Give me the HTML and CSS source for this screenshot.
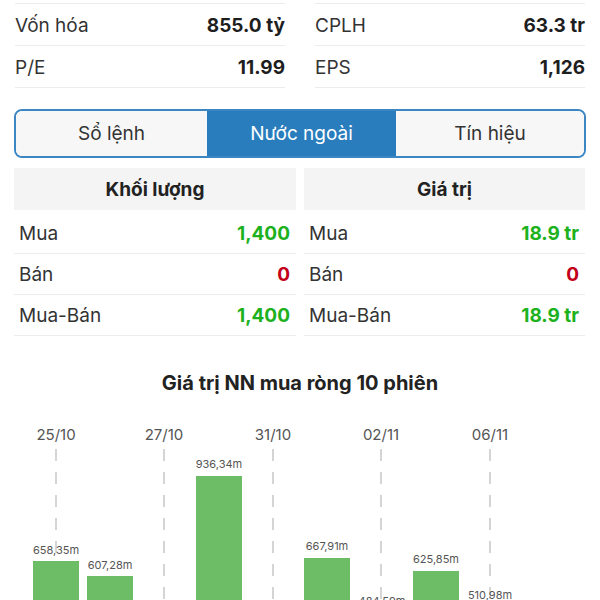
FILE: index.html
```html
<!DOCTYPE html>
<html>
<head>
  <meta charset="UTF-8">
  <title>Nước ngoài</title>
  <link rel="stylesheet" href="styles.css">
</head>
<body>
  <div class="stats">
    <div class="stat-col">
      <div class="stat-row">
        <span class="stat-label">Vốn hóa</span>
        <span class="stat-value">855.0 tỷ</span>
      </div>
      <div class="stat-row">
        <span class="stat-label">P/E</span>
        <span class="stat-value">11.99</span>
      </div>
    </div>
    <div class="stat-col">
      <div class="stat-row">
        <span class="stat-label">CPLH</span>
        <span class="stat-value">63.3 tr</span>
      </div>
      <div class="stat-row">
        <span class="stat-label">EPS</span>
        <span class="stat-value">1,126</span>
      </div>
    </div>
  </div>

  <div class="tabs">
    <button class="tab">Sổ lệnh</button>
    <button class="tab active">Nước ngoài</button>
    <button class="tab">Tín hiệu</button>
  </div>

  <div class="foreign">
    <div class="foreign-col">
      <div class="foreign-head">Khối lượng</div>
      <div class="foreign-row first">
        <span class="foreign-label">Mua</span>
        <span class="foreign-value up">1,400</span>
      </div>
      <div class="foreign-row">
        <span class="foreign-label">Bán</span>
        <span class="foreign-value down">0</span>
      </div>
      <div class="foreign-row">
        <span class="foreign-label">Mua-Bán</span>
        <span class="foreign-value up">1,400</span>
      </div>
    </div>
    <div class="foreign-col">
      <div class="foreign-head">Giá trị</div>
      <div class="foreign-row first">
        <span class="foreign-label">Mua</span>
        <span class="foreign-value up">18.9 tr</span>
      </div>
      <div class="foreign-row">
        <span class="foreign-label">Bán</span>
        <span class="foreign-value down">0</span>
      </div>
      <div class="foreign-row">
        <span class="foreign-label">Mua-Bán</span>
        <span class="foreign-value up">18.9 tr</span>
      </div>
    </div>
  </div>

  <div class="chart">
    <h2 class="chart-title">Giá trị NN mua ròng 10 phiên</h2>
    <svg class="chart-svg" width="600" height="230" viewBox="0 0 600 230">
      <g class="grid">
        <line x1="56" y1="54" x2="56" y2="230"/>
        <line x1="164" y1="54" x2="164" y2="230"/>
        <line x1="273" y1="54" x2="273" y2="230"/>
        <line x1="381" y1="54" x2="381" y2="230"/>
        <line x1="490" y1="54" x2="490" y2="230"/>
      </g>
      <g class="dates">
        <text x="56" y="45">25/10</text>
        <text x="164" y="45">27/10</text>
        <text x="273" y="45">31/10</text>
        <text x="381" y="45">02/11</text>
        <text x="490" y="45">06/11</text>
      </g>
      <g class="bars">
        <rect x="33" y="166" width="46" height="80"/>
        <rect x="87" y="181" width="46" height="80"/>
        <rect x="196" y="81" width="46" height="160"/>
        <rect x="304" y="163" width="46" height="80"/>
        <rect x="359" y="219" width="46" height="40"/>
        <rect x="413" y="176" width="46" height="80"/>
        <rect x="467" y="211" width="46" height="40"/>
      </g>
      <g class="bar-labels">
        <text x="56" y="159">658,35m</text>
        <text x="110" y="174">607,28m</text>
        <text x="219" y="73">936,34m</text>
        <text x="327" y="155">667,91m</text>
        <text x="382" y="210">484,59m</text>
        <text x="436" y="168">625,85m</text>
        <text x="490" y="204">510,98m</text>
      </g>
    </svg>
  </div>
</body>
</html>
```

FILE: styles.css
```css
body {
  margin: 0;
  width: 600px;
  height: 600px;
  overflow: hidden;
  font-family: Inter, "Noto Sans", sans-serif;
  background: white;
  color: #222;
}

.stats {
  display: grid;
  grid-template-columns: 1fr 1fr;
  column-gap: 30px;
  padding: 3px 15px 0;
}

.stat-row {
  display: flex;
  justify-content: space-between;
  align-items: center;
  height: 40px;
  padding-top: 1px;
  border-top: 1px solid #ececec;
  font-size: 19px;
}

.stat-row:last-child {
  border-bottom: 1px solid #ececec;
}

.stat-label {
  color: #333;
}

.stat-value {
  font-weight: 700;
  color: #1e1e1e;
}

.tabs {
  display: grid;
  grid-template-columns: 191px 189px 1fr;
  margin: 21px 14px 0;
  height: 49px;
  box-sizing: border-box;
  border: 2px solid #3c86c4;
  border-radius: 8px;
  overflow: hidden;
}

.tab {
  border: none;
  background: #f7f7f7;
  font-family: inherit;
  font-size: 19px;
  color: #333;
  padding: 0;
}

.tab.active {
  background: #2a7dbd;
  color: white;
}

.foreign {
  display: grid;
  grid-template-columns: 282px 281px;
  column-gap: 8px;
  margin: 10px 14px 0;
}

.foreign-head {
  background: #f4f4f4;
  height: 42px;
  display: flex;
  align-items: center;
  justify-content: center;
  font-size: 19px;
  font-weight: 700;
  color: #222;
}

.foreign-row {
  display: flex;
  justify-content: space-between;
  align-items: center;
  height: 40px;
  padding: 0 6px 0 5px;
  border-bottom: 1px solid #ececec;
  font-size: 19px;
}

.foreign-row.first {
  height: 44px;
  padding-top: 3px;
  box-sizing: border-box;
}

.foreign-label {
  color: #333;
}

.foreign-value {
  font-weight: 700;
}

.up {
  color: #1db11d;
}

.down {
  color: #c3001a;
}

.chart-title {
  margin: 35px 0 0;
  text-align: center;
  font-size: 20px;
  line-height: 24px;
  font-weight: 700;
  color: #222;
}

.chart-svg {
  display: block;
}

.grid line {
  stroke: #c8c8c8;
  stroke-width: 1.5;
  stroke-dasharray: 12 11;
}

.dates text {
  font-size: 15px;
  fill: #555;
  text-anchor: middle;
}

.bars rect {
  fill: #6dbd67;
}

.bar-labels text {
  font-size: 11px;
  fill: #555;
  text-anchor: middle;
}
```
